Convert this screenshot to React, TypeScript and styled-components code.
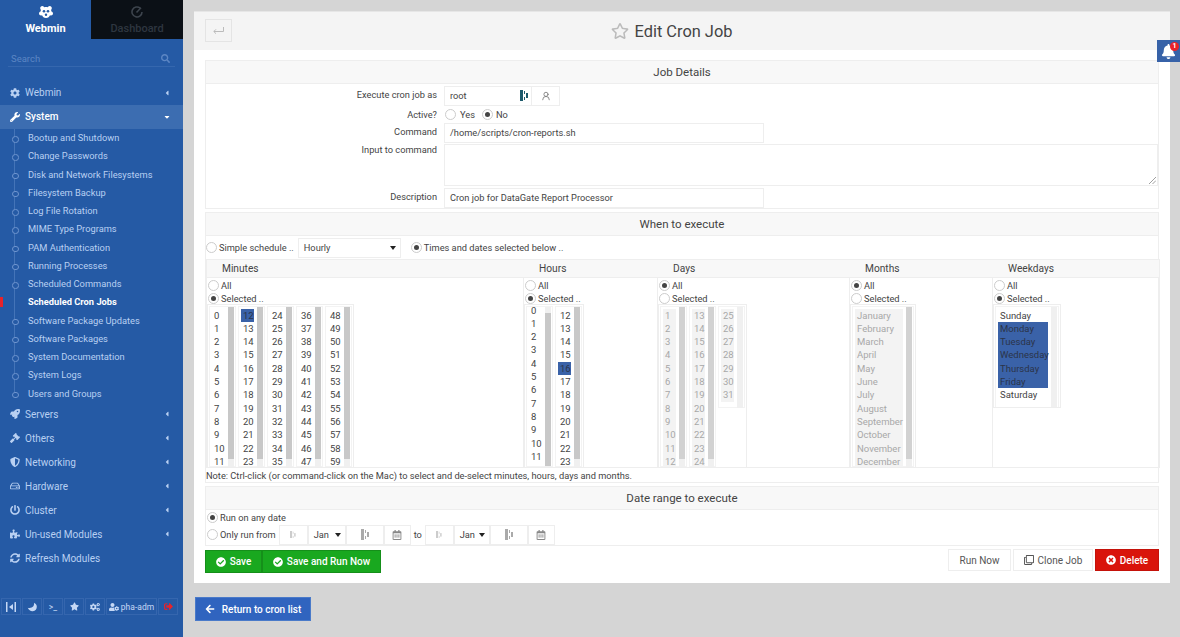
import React from 'react';
import styled, { createGlobalStyle } from 'styled-components';
import {
  FaCog, FaWrench, FaRocket, FaGavel, FaShieldAlt, FaRegHdd, FaPowerOff, FaPuzzlePiece, FaSyncAlt,
  FaSearch, FaStar, FaRegStar, FaCogs, FaUserCog, FaSignOutAlt, FaCheckCircle, FaTimesCircle,
  FaArrowLeft, FaBell, FaRegClone, FaRegCalendarAlt, FaCaretLeft, FaCaretDown,
} from 'react-icons/fa';
import { UserRound } from 'lucide-react';

const GlobalStyle = createGlobalStyle`
  html, body { margin: 0; padding: 0; height: 637px; overflow: hidden; }
  body { font-family: Roboto, "Liberation Sans", sans-serif; font-size: 9.25px; color: #444; background: #d5d5d5; }
  * { box-sizing: border-box; }
`;

const Page = styled.div`
  display: flex;
  width: 1180px;
  height: 637px;
  position: relative;
`;

/* sidebar */
const Sidebar = styled.aside`
  width: 183px;
  flex: none;
  display: flex;
  flex-direction: column;
  background: #255aa5;
  color: #b9d0f2;
`;

const Tabs = styled.div`
  display: flex;
  height: 39px;
`;

const Tab = styled.div<{ $active?: boolean }>`
  width: ${p => (p.$active ? 91 : 92)}px;
  display: flex;
  flex-direction: column;
  align-items: center;
  padding-top: 6px;
  gap: 4px;
  font-size: 11px;
  line-height: 13px;
  font-weight: ${p => (p.$active ? 700 : 500)};
  color: ${p => (p.$active ? '#fff' : '#2e3640')};
  background: ${p => (p.$active ? 'transparent' : '#0b1016')};
  svg { display: block; }
`;

const SearchRow = styled.div`
  display: flex;
  justify-content: space-between;
  align-items: center;
  height: 18px;
  margin: 10px 8px 0;
  padding: 1px 5px 0 3px;
  border-bottom: 1px solid #3567ae;
  color: #5c86c4;
  font-size: 9.5px;
`;

const Nav = styled.nav`
  margin-top: 14px;
`;

const NavRow = styled.div<{ $open?: boolean }>`
  display: flex;
  align-items: center;
  height: 24px;
  padding: 0 12px 1px 10px;
  font-size: 10px;
  font-weight: ${p => (p.$open ? 500 : 400)};
  color: ${p => (p.$open ? '#fff' : '#b9d0f2')};
  background: ${p => (p.$open ? '#3c6db1' : 'transparent')};
`;

const NavIcon = styled.span`
  width: 15px;
  display: flex;
  justify-content: center;
  font-size: 10px;
  transform: translateX(-3px);
`;

const NavLabel = styled.span`
  flex: 1;
`;

const SubList = styled.div`
  position: relative;
`;

const TreeLine = styled.div`
  position: absolute;
  left: 14px;
  top: 0;
  bottom: 10px;
  width: 1px;
  background: #4474b8;
`;

const SubRow = styled.div<{ $current?: boolean }>`
  position: relative;
  display: flex;
  align-items: center;
  height: 18.25px;
  padding: 0 0 1px 28px;
  font-size: 9.3px;
  font-weight: ${p => (p.$current ? 700 : 400)};
  color: ${p => (p.$current ? '#fff' : '#b9d0f2')};
  &::before {
    content: '';
    position: absolute;
    left: ${p => (p.$current ? 0 : 12)}px;
    top: ${p => (p.$current ? 4 : 7)}px;
    width: ${p => (p.$current ? 3 : 4.5)}px;
    height: ${p => (p.$current ? 10 : 4.5)}px;
    border-radius: ${p => (p.$current ? 0 : '50%')};
    background: ${p => (p.$current ? '#e8232a' : '#255aa5')};
    border: ${p => (p.$current ? 'none' : '1px solid #6f95cf')};
  }
`;

const SideFooter = styled.div`
  margin-top: auto;
  margin-bottom: 22px;
  padding-left: 1px;
  display: flex;
  gap: 1px;
`;

const FootButton = styled.div<{ $w?: number; $red?: boolean }>`
  width: ${p => p.$w ?? 20}px;
  height: 17px;
  display: flex;
  align-items: center;
  justify-content: center;
  gap: 2px;
  border: 1px solid #3566ae;
  color: ${p => (p.$red ? '#e8232a' : '#c5d8f5')};
  font-size: 8.5px;
`;

/* main column */
const Main = styled.main`
  flex: 1;
  min-width: 0;
  padding: 11px 10px 0 11px;
`;

const Panel = styled.div`
  height: 572px;
  background: #fff;
  border-top: 1px solid #e6e6e6;
`;

const PanelHead = styled.div`
  position: relative;
  height: 38px;
  padding-right: 21px;
  background: #f4f4f4;
  display: flex;
  align-items: center;
  justify-content: center;
  gap: 6px;
  font-size: 16.4px;
  color: #444;
  svg { color: #bbb; }
`;

const BackButton = styled.div`
  position: absolute;
  left: 11px;
  top: 7px;
  width: 27px;
  height: 23px;
  display: flex;
  align-items: center;
  justify-content: center;
  background: #f4f4f4;
  border: 1px solid #e4e4e4;
`;

const PanelBody = styled.div`
  padding: 10px 11px 0;
`;

const Section = styled.section`
  border: 1px solid #eee;
  margin-bottom: 3px;
`;

const SectionHead = styled.div`
  height: 23px;
  background: #f8f8f8;
  border-bottom: 1px solid #eee;
  display: flex;
  align-items: center;
  justify-content: center;
  font-size: 11.5px;
  color: #444;
`;

const FormGrid = styled.div`
  display: grid;
  grid-template-columns: 231px 1fr;
  column-gap: 7px;
  padding: 2px 0 0;
`;

const Label = styled.div<{ $h: number; $pt: number }>`
  height: ${p => p.$h}px;
  padding-top: ${p => p.$pt}px;
  text-align: right;
  color: #444;
`;

const Field = styled.div<{ $h: number }>`
  height: ${p => p.$h}px;
  display: flex;
  align-items: center;
`;

const TextBox = styled.div<{ $w?: string; $h?: number }>`
  width: ${p => p.$w ?? '320px'};
  height: ${p => p.$h ?? 20}px;
  position: relative;
  display: flex;
  align-items: center;
  justify-content: space-between;
  padding: 0 3px 1px 5px;
  border: 1px solid #eee;
  background: #fff;
  color: #444;
  flex: none;
`;

const ResizeHandle = styled.svg`
  position: absolute;
  right: 1px;
  bottom: 1px;
`;

const IconBox = styled.div`
  width: 28px;
  height: 20px;
  flex: none;
  display: flex;
  align-items: center;
  justify-content: center;
  border: 1px solid #eee;
  border-left: none;
  color: #777;
`;

const Dot = styled.span<{ $on?: boolean }>`
  display: inline-flex;
  width: 11px;
  height: 11px;
  flex: none;
  align-items: center;
  justify-content: center;
  border: 1px solid #ccc;
  border-radius: 50%;
  background: #fff;
  &::after {
    content: '';
    width: 5px;
    height: 5px;
    border-radius: 50%;
    background: ${p => (p.$on ? '#444' : 'transparent')};
  }
`;

const Choice = styled.label<{ $gap?: number; $ml?: number; $mr?: number }>`
  display: flex;
  flex: none;
  align-items: center;
  gap: ${p => p.$gap ?? 2}px;
  height: 13px;
  margin-left: ${p => p.$ml ?? 0}px;
  margin-right: ${p => p.$mr ?? 0}px;
  color: #444;
  white-space: nowrap;
`;

const ScheduleRow = styled.div`
  display: flex;
  align-items: center;
  height: 23px;
`;

const SelectBox = styled.div<{ $w: number; $ml?: number }>`
  width: ${p => p.$w}px;
  height: 20px;
  flex: none;
  margin-left: ${p => p.$ml ?? 0}px;
  display: flex;
  align-items: center;
  justify-content: space-between;
  padding: 0 4px 0 5px;
  border: 1px solid #eee;
  color: #444;
`;

const Caret = styled.span`
  width: 0;
  height: 0;
  border-left: 3px solid transparent;
  border-right: 3px solid transparent;
  border-top: 4px solid #222;
`;

const CronTable = styled.div`
  display: grid;
  grid-template-columns: 316px 134px 192px 143px 167px;
  grid-template-rows: 18px 189px;
  border: 1px solid #eee;
  width: 954px;
`;

const ColHead = styled.div<{ $first?: boolean }>`
  display: flex;
  align-items: center;
  padding-left: ${p => (p.$first ? 15 : 16)}px;
  background: #f8f8f8;
  border-bottom: 1px solid #eee;
  font-size: 10.2px;
  color: #444;
`;

const ColBody = styled.div<{ $first?: boolean }>`
  padding: 1px 0 0;
  border-left: ${p => (p.$first ? 'none' : '1px solid #eee')};
  overflow: hidden;
`;

const ChoiceStack = styled.div`
  display: flex;
  flex-direction: column;
  height: 25px;
  padding-left: 1px;
`;

const ListGroup = styled.div<{ $short?: boolean }>`
  display: inline-flex;
  height: ${p => (p.$short ? 104 : 164)}px;
  gap: 2px;
  padding: 1px;
  border: 1px solid #eee;
  overflow: hidden;
`;

const ListBox = styled.div<{ $w: number; $short?: boolean }>`
  width: ${p => p.$w}px;
  height: ${p => (p.$short ? 102 : 161)}px;
  flex: none;
  display: flex;
  justify-content: space-between;
  padding-left: 3px;
  background: #fff;
  overflow: hidden;
  box-shadow: 0 0 0 1px #f3f3f3 inset;
`;

const Rows = styled.div<{ $shift?: number }>`
  flex: 1;
  margin-top: ${p => 2.5 + (p.$shift ?? 0)}px;
  min-width: 0;
`;

const Item = styled.div<{ $sel?: boolean; $off?: boolean }>`
  height: 13.34px;
  line-height: 13.34px;
  padding-left: 2px;
  font-size: 9.5px;
  white-space: nowrap;
  color: ${p => (p.$off ? '#a8a8a8' : p.$sel ? '#2b3448' : '#444')};
  background: ${p => (p.$sel ? '#3a62a8' : p.$off ? '#f3f3f3' : 'transparent')};
`;

const Track = styled.div`
  width: 6px;
  flex: none;
  margin: 1px 2px 0 3px;
  background: #f0f0f0;
`;

const Thumb = styled.div<{ $top: number; $h: number; $off?: boolean }>`
  margin-top: ${p => p.$top}px;
  height: ${p => p.$h}px;
  background: ${p => (p.$off ? '#d2d2d2' : '#c8c8c8')};
`;

const Note = styled.div`
  height: 14px;
  padding: 2px 0 0;
  color: #444;
`;

const DateBody = styled.div`
  padding-left: 1px;
`;

const DateRow = styled.div`
  display: flex;
  align-items: center;
  height: 21px;
`;

const AnyDateRow = styled.div`
  display: flex;
  align-items: center;
  height: 14px;
`;

const ToLabel = styled.span`
  width: 14px;
  padding-left: 3px;
  flex: none;
`;

const DateCell = styled.div<{ $w: number }>`
  width: ${p => p.$w}px;
  height: 20px;
  flex: none;
  display: flex;
  align-items: center;
  justify-content: center;
  border: 1px solid #eee;
  color: #888;
`;

const ActionBar = styled.div`
  display: flex;
  justify-content: space-between;
  align-items: flex-start;
`;

const ButtonGroup = styled.div<{ $gap?: number; $top?: number }>`
  display: flex;
  gap: ${p => p.$gap ?? 0}px;
  margin-top: ${p => p.$top ?? 0}px;
`;

const Btn = styled.div<{ $kind: 'green' | 'red' | 'plain'; $w: number }>`
  width: ${p => p.$w}px;
  height: ${p => (p.$kind === 'green' ? 23 : 22)}px;
  display: flex;
  align-items: center;
  justify-content: center;
  gap: 4px;
  font-size: 10px;
  font-weight: ${p => (p.$kind === 'plain' ? 400 : 500)};
  color: ${p => (p.$kind === 'plain' ? '#555' : '#fff')};
  background: ${p => (p.$kind === 'green' ? '#19a81f' : p.$kind === 'red' ? '#d9140b' : '#fff')};
  border: 1px solid ${p => (p.$kind === 'green' ? '#158f1a' : p.$kind === 'red' ? '#c4120a' : '#eee')};
`;

const ReturnBtn = styled.div`
  width: 116px;
  height: 24px;
  margin: 14px 0 0 1px;
  display: flex;
  align-items: center;
  justify-content: center;
  gap: 7px;
  background: #3064bf;
  border: 1px solid #4a7ac9;
  color: #fff;
  font-size: 10px;
  font-weight: 500;
`;

const BellTab = styled.div`
  position: absolute;
  right: 0;
  top: 40px;
  width: 23px;
  height: 22px;
  display: flex;
  align-items: center;
  justify-content: center;
  background: #3762a8;
  color: #fff;
`;

const Badge = styled.span`
  position: absolute;
  right: 1px;
  top: 2px;
  width: 9px;
  height: 9px;
  border-radius: 50%;
  background: #e8232a;
  color: #fff;
  font-size: 7px;
  font-weight: 700;
  line-height: 9px;
  text-align: center;
`;

const Chooser = ({ color = '#1d5a6c', scale = 1 }: { color?: string; scale?: number }) => (
  <svg width={8 * scale} height={11 * scale} viewBox="0 0 8 11">
    <rect x="0" y="0" width="3" height="11" fill={color} />
    <rect x="4" y="1" width="1" height="3" fill={color} />
    <rect x="4" y="7" width="1" height="3" fill={color} />
    <rect x="6" y="3" width="2" height="5" fill={color} />
  </svg>
);

const Logo = () => (
  <svg width="14" height="12" viewBox="0 0 14 12">
    <path
      fill="#fff"
      d="M3.300 0C4.500 0 5 .8 5.300 1.300c1-.4 2.400-.4 3.400 0C9 .8 9.500 0 10.700 0 12 0 12.800 1 12.800 2.200c0 .8-.4 1.400-.8 1.800.3.500.4 1 .4 1.500.9.300 1.600 1 1.600 2 0 1.200-1 2-2 2-.3 0-.7-.1-1-.2C10.300 10.900 9.200 12 7 12s-3.300-1.100-4-2.700c-.3.100-.7.2-1 .2-1 0-2-.8-2-2 0-1 .7-1.700 1.600-2 0-.5.100-1 .4-1.500-.4-.4-.8-1-.8-1.800C1.200 1 2 0 3.300 0z"
    />
    <circle cx="5" cy="5.200" r="1.300" fill="#255aa5" />
    <circle cx="9" cy="5.200" r="1.300" fill="#255aa5" />
    <circle cx="7" cy="8.800" r="1.200" fill="#255aa5" />
  </svg>
);

const Gauge = () => (
  <svg width="12" height="12" viewBox="0 0 12 12" fill="none" stroke="#3d444d">
    <path strokeWidth="1.600" d="M9.200 2.100A5 5 0 1 0 11 6" />
    <path strokeWidth="1.500" d="M5.500 6.500 10 1.800" />
  </svg>
);

const CollapseIcon = () => (
  <svg width="10" height="10" viewBox="0 0 10 10" fill="#c5d8f5">
    <rect x="0" y="0" width="1.500" height="10" />
    <rect x="8.500" y="0" width="1.500" height="10" />
    <path d="M7 2v6L3 5z" />
  </svg>
);

const Crescent = () => (
  <svg width="10" height="10" viewBox="0 0 10 10" fill="#c5d8f5">
    <path d="M7 .8c.5 3-1.500 5.500-5 5.200-.4 0-.8-.1-1.200-.2C1.700 8 3.700 9.400 5.800 9.200 8.400 9 10 6.800 9.800 4.500 9.700 3 8.600 1.500 7 .8z" />
  </svg>
);

const BackArrow = () => (
  <svg width="11" height="7" viewBox="0 0 11 7" fill="none" stroke="#bbb" strokeWidth="1">
    <path d="M10.500 0v4.500H1" />
    <path d="M3 2.300.8 4.500 3 6.700" />
  </svg>
);

const topMenus = [
  { label: 'Servers', icon: <FaRocket /> },
  { label: 'Others', icon: <FaGavel /> },
  { label: 'Networking', icon: <FaShieldAlt /> },
  { label: 'Hardware', icon: <FaRegHdd /> },
  { label: 'Cluster', icon: <FaPowerOff /> },
  { label: 'Un-used Modules', icon: <FaPuzzlePiece /> },
];

const systemItems = [
  'Bootup and Shutdown', 'Change Passwords', 'Disk and Network Filesystems', 'Filesystem Backup',
  'Log File Rotation', 'MIME Type Programs', 'PAM Authentication', 'Running Processes',
  'Scheduled Commands', 'Scheduled Cron Jobs', 'Software Package Updates', 'Software Packages',
  'System Documentation', 'System Logs', 'Users and Groups',
];

const range = (from: number, to: number) => {
  const out: string[] = [];
  for (let i = from; i <= to; i++) out.push(String(i));
  return out;
};

const months = ['January', 'February', 'March', 'April', 'May', 'June', 'July', 'August', 'September', 'October', 'November', 'December'];
const weekdays = ['Sunday', 'Monday', 'Tuesday', 'Wednesday', 'Thursday', 'Friday', 'Saturday'];

interface ListProps {
  items: string[];
  w?: number;
  sel?: string[];
  off?: boolean;
  shift?: number;
  top?: number;
  thumb?: number;
  short?: boolean;
}

const List: React.FC<ListProps> = ({ items, w = 27, sel = [], off, shift, top = 0, thumb = 0, short }) => (
  <ListBox $w={w} $short={short}>
    <Rows $shift={shift}>
      {items.map(i => (
        <Item key={i} $sel={sel.includes(i)} $off={off}>{i}</Item>
      ))}
    </Rows>
    <Track>{thumb > 0 && <Thumb $top={top} $h={thumb} $off={off} />}</Track>
  </ListBox>
);

const AllOrSelected = ({ all }: { all?: boolean }) => (
  <ChoiceStack>
    <Choice><Dot $on={all} />All</Choice>
    <Choice><Dot $on={!all} />Selected ..</Choice>
  </ChoiceStack>
);

const DateInputs = ({ selectWidth }: { selectWidth: number }) => (
  <>
    <DateCell $w={29}><Chooser color="#ccc" scale={0.7} /></DateCell>
    <SelectBox $w={selectWidth}>Jan<Caret /></SelectBox>
    <DateCell $w={38}><Chooser color="#aaa" /></DateCell>
    <DateCell $w={27}><FaRegCalendarAlt size={10} /></DateCell>
  </>
);

export default function App() {
  return (
    <Page>
      <GlobalStyle />
      <Sidebar>
        <Tabs>
          <Tab $active><Logo />Webmin</Tab>
          <Tab><Gauge />Dashboard</Tab>
        </Tabs>
        <SearchRow>Search<FaSearch size={9} /></SearchRow>
        <Nav>
          <NavRow><NavIcon><FaCog /></NavIcon><NavLabel>Webmin</NavLabel><FaCaretLeft size={8} /></NavRow>
          <NavRow $open><NavIcon><FaWrench /></NavIcon><NavLabel>System</NavLabel><FaCaretDown size={8} /></NavRow>
          <SubList>
            <TreeLine />
            {systemItems.map(s => (
              <SubRow key={s} $current={s === 'Scheduled Cron Jobs'}>{s}</SubRow>
            ))}
          </SubList>
          {topMenus.map(m => (
            <NavRow key={m.label}><NavIcon>{m.icon}</NavIcon><NavLabel>{m.label}</NavLabel><FaCaretLeft size={8} /></NavRow>
          ))}
          <NavRow><NavIcon><FaSyncAlt /></NavIcon><NavLabel>Refresh Modules</NavLabel></NavRow>
        </Nav>
        <SideFooter>
          <FootButton><CollapseIcon /></FootButton>
          <FootButton><Crescent /></FootButton>
          <FootButton>&gt;_</FootButton>
          <FootButton><FaStar size={9} /></FootButton>
          <FootButton><FaCogs size={10} /></FootButton>
          <FootButton $w={51}><FaUserCog size={10} />pha-adm</FootButton>
          <FootButton $red><FaSignOutAlt size={9} /></FootButton>
        </SideFooter>
      </Sidebar>

      <Main>
        <Panel>
          <PanelHead>
            <BackButton><BackArrow /></BackButton>
            <FaRegStar size={18} />
            Edit Cron Job
          </PanelHead>
          <PanelBody>
            <Section>
              <SectionHead>Job Details</SectionHead>
              <FormGrid>
                <Label $h={20} $pt={3}>Execute cron job as</Label>
                <Field $h={20}>
                  <TextBox $w="88px">root<Chooser /></TextBox>
                  <IconBox><UserRound size={10} /></IconBox>
                </Field>
                <Label $h={16} $pt={3}>Active?</Label>
                <Field $h={16}>
                  <Choice $gap={4} $ml={1}><Dot />Yes</Choice>
                  <Choice $gap={3} $ml={7}><Dot $on />No</Choice>
                </Field>
                <Label $h={21} $pt={4}>Command</Label>
                <Field $h={21}><TextBox>/home/scripts/cron-reports.sh</TextBox></Field>
                <Label $h={44} $pt={1}>Input to command</Label>
                <Field $h={44}>
                  <TextBox $w="714px" $h={42}>
                    <ResizeHandle width="7" height="7" viewBox="0 0 7 7" stroke="#888" strokeWidth="0.800">
                      <path d="M0 7 7 0M3.500 7 7 3.500" />
                    </ResizeHandle>
                  </TextBox>
                </Field>
                <Label $h={21} $pt={4}>Description</Label>
                <Field $h={21}><TextBox>Cron job for DataGate Report Processor</TextBox></Field>
              </FormGrid>
            </Section>

            <Section>
              <SectionHead>When to execute</SectionHead>
              <ScheduleRow>
                <Choice><Dot />Simple schedule ..</Choice>
                <SelectBox $w={103} $ml={4}>Hourly<Caret /></SelectBox>
                <Choice $ml={10}><Dot $on />Times and dates selected below ..</Choice>
              </ScheduleRow>
              <CronTable>
                <ColHead $first>Minutes</ColHead>
                <ColHead>Hours</ColHead>
                <ColHead>Days</ColHead>
                <ColHead>Months</ColHead>
                <ColHead>Weekdays</ColHead>
                <ColBody $first>
                  <AllOrSelected />
                  <ListGroup>
                    <List items={range(0, 11)} thumb={152} />
                    <List items={range(12, 23)} sel={['12']} thumb={152} />
                    <List items={range(24, 35)} thumb={152} />
                    <List items={range(36, 47)} thumb={152} />
                    <List items={range(48, 59)} thumb={152} />
                  </ListGroup>
                </ColBody>
                <ColBody>
                  <AllOrSelected />
                  <ListGroup>
                    <List items={range(0, 11)} shift={-5} top={6} thumb={153} />
                    <List items={range(12, 23)} sel={['16']} thumb={152} />
                  </ListGroup>
                </ColBody>
                <ColBody>
                  <AllOrSelected all />
                  <ListGroup>
                    <List items={range(1, 12)} off thumb={152} />
                    <List items={range(13, 24)} off thumb={152} />
                    <List items={range(25, 31)} off short />
                  </ListGroup>
                </ColBody>
                <ColBody>
                  <AllOrSelected all />
                  <ListGroup>
                    <List items={months} w={62} off thumb={152} />
                  </ListGroup>
                </ColBody>
                <ColBody>
                  <AllOrSelected />
                  <ListGroup $short>
                    <List items={weekdays} w={64} sel={weekdays.slice(1, 6)} short />
                  </ListGroup>
                </ColBody>
              </CronTable>
              <Note>Note: Ctrl-click (or command-click on the Mac) to select and de-select minutes, hours, days and months.</Note>
            </Section>

            <Section>
              <SectionHead>Date range to execute</SectionHead>
              <DateBody>
                <AnyDateRow><Choice><Dot $on />Run on any date</Choice></AnyDateRow>
                <DateRow>
                  <Choice $mr={3}><Dot />Only run from</Choice>
                  <DateInputs selectWidth={38} />
                  <ToLabel>to</ToLabel>
                  <DateInputs selectWidth={36} />
                </DateRow>
              </DateBody>
            </Section>

            <ActionBar>
              <ButtonGroup $top={1}>
                <Btn $kind="green" $w={57}><FaCheckCircle size={10} />Save</Btn>
                <Btn $kind="green" $w={119}><FaCheckCircle size={10} />Save and Run Now</Btn>
              </ButtonGroup>
              <ButtonGroup $gap={2}>
                <Btn $kind="plain" $w={63}>Run Now</Btn>
                <Btn $kind="plain" $w={80}><FaRegClone size={10} />Clone Job</Btn>
                <Btn $kind="red" $w={64}><FaTimesCircle size={10} />Delete</Btn>
              </ButtonGroup>
            </ActionBar>
          </PanelBody>
        </Panel>
        <ReturnBtn><FaArrowLeft size={10} />Return to cron list</ReturnBtn>
      </Main>

      <BellTab>
        <FaBell size={15} />
        <Badge>1</Badge>
      </BellTab>
    </Page>
  );
}
